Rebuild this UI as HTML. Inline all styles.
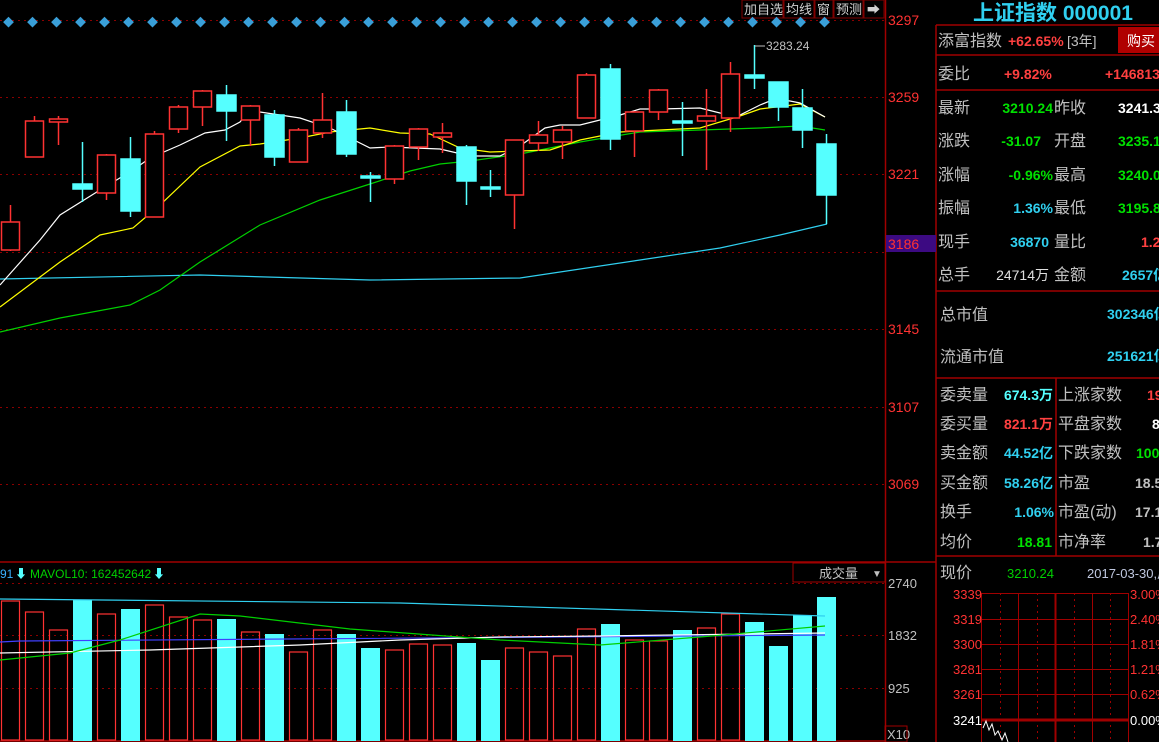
<!DOCTYPE html>
<html><head><meta charset="utf-8"><style>
body{margin:0;background:#000;width:1159px;height:742px;overflow:hidden;font-family:"Liberation Sans","Noto Sans CJK SC",sans-serif}
svg{display:block}
.lb{fill:#c0c0c0;font-size:16px;font-family:"Liberation Sans","Noto Sans CJK SC",sans-serif}
.nm{font-size:14px;font-weight:bold;font-family:"Liberation Sans","Noto Sans CJK SC",sans-serif}
.ax{fill:#ff3232;font-size:14px}
</style></head><body>
<svg width="1159" height="742" xmlns="http://www.w3.org/2000/svg" font-family="Liberation Sans, Noto Sans CJK SC, sans-serif">
<rect width="1159" height="742" fill="#000"/>
<g stroke="#8b0000" stroke-dasharray="2,4" stroke-width="1">
<line x1="0" y1="20.5" x2="885" y2="20.5"/><line x1="0" y1="97.5" x2="885" y2="97.5"/><line x1="0" y1="174.5" x2="885" y2="174.5"/><line x1="0" y1="252.5" x2="885" y2="252.5"/><line x1="0" y1="329.5" x2="885" y2="329.5"/><line x1="0" y1="407.5" x2="885" y2="407.5"/><line x1="0" y1="484.5" x2="885" y2="484.5"/>
<line x1="0" y1="583.5" x2="885" y2="583.5"/><line x1="0" y1="635.5" x2="885" y2="635.5"/><line x1="0" y1="688.5" x2="885" y2="688.5"/>
</g>
<g stroke="#a00000" stroke-width="1.5" fill="none">
<line x1="885.5" y1="0" x2="885.5" y2="742"/>
<line x1="936" y1="25" x2="936" y2="742"/>
<line x1="0" y1="562" x2="936" y2="562"/>
<line x1="0" y1="741" x2="885" y2="741"/>
</g>
<g class="ax">
<text x="888" y="25">3297</text><text x="888" y="102">3259</text><text x="888" y="179">3221</text><text x="888" y="334">3145</text><text x="888" y="412">3107</text><text x="888" y="489">3069</text>
</g>
<rect x="886" y="235" width="50" height="17" fill="#3c0a82"/>
<text x="888" y="249" fill="#ff3232" font-size="14">3186</text>
<g fill="#c0c0c0" font-size="13"><text x="888" y="588">2740</text><text x="888" y="640">1832</text><text x="888" y="693">925</text><text x="887" y="739">X10</text></g>
<rect x="885" y="726" width="22" height="16" fill="none" stroke="#a00000"/>
<g stroke="#800000" fill="none"><rect x="742" y="0" width="41" height="18"/><rect x="784" y="0" width="30" height="18"/><rect x="815" y="0" width="18" height="18"/><rect x="834" y="0" width="29" height="18"/><rect x="864" y="0" width="20" height="18"/></g>
<g fill="#d0d0d0" font-size="13"><text x="744" y="14">加自选</text><text x="786" y="14">均线</text><text x="817" y="14">窗</text><text x="836" y="14">预测</text><text x="867" y="14" font-weight="bold">➡</text></g>
<g fill="#3a9fd8" font-size="11">
<text x="3" y="26">◆</text><text x="27" y="26">◆</text><text x="51" y="26">◆</text><text x="75" y="26">◆</text><text x="99" y="26">◆</text><text x="123" y="26">◆</text><text x="147" y="26">◆</text><text x="171" y="26">◆</text><text x="195" y="26">◆</text><text x="219" y="26">◆</text><text x="243" y="26">◆</text><text x="267" y="26">◆</text><text x="291" y="26">◆</text><text x="315" y="26">◆</text><text x="339" y="26">◆</text><text x="363" y="26">◆</text><text x="387" y="26">◆</text><text x="411" y="26">◆</text><text x="435" y="26">◆</text><text x="459" y="26">◆</text><text x="483" y="26">◆</text><text x="507" y="26">◆</text><text x="531" y="26">◆</text><text x="555" y="26">◆</text><text x="579" y="26">◆</text><text x="603" y="26">◆</text><text x="627" y="26">◆</text><text x="651" y="26">◆</text><text x="675" y="26">◆</text><text x="699" y="26">◆</text><text x="723" y="26">◆</text><text x="747" y="26">◆</text><text x="771" y="26">◆</text><text x="795" y="26">◆</text><text x="819" y="26">◆</text>
</g>
<g fill="none" stroke-width="1.2">
<polyline stroke="#30d0f0" points="0,279 200,275 370,280 520,278 640,260 720,248 780,235 827,224"/>
<polyline stroke="#00d000" points="0,332 60,318 130,305 160,290 200,262 260,225 320,200 370,184 410,171 440,164 470,161 520,154 580,142 640,132 700,130 760,128 800,126 825,130"/>
<polyline stroke="#ffff00" points="0,307 60,262 100,235 133,228 160,205 200,167 240,146 260,144 300,138 330,132 370,128 400,133 430,134 460,148 490,152 550,150 580,140 620,132 660,130 700,128 740,116 760,109 800,104 825,117"/>
<polyline stroke="#ffffff" points="0,285 40,240 60,215 100,190 133,170 150,158 180,145 205,133 225,130 240,122 250,110 260,112 300,118 330,128 370,148 390,147 440,149 470,156 500,156 520,146 545,128 560,125 580,125 620,115 640,109 660,109 700,108 720,113 740,115 760,105 775,99 790,101 800,103 825,117"/>
</g>
<g stroke="#ff3232" stroke-width="1.5" fill="#000">
<line x1="10.5" y1="205" x2="10.5" y2="251"/><rect x="1.5" y="222" width="18" height="28"/>
<line x1="34.5" y1="116" x2="34.5" y2="121"/><rect x="25.5" y="121" width="18" height="36"/>
<line x1="58.5" y1="116" x2="58.5" y2="145"/><rect x="49.5" y="119" width="18" height="3"/>
<line x1="106.5" y1="154" x2="106.5" y2="200"/><rect x="97.5" y="155" width="18" height="38"/>
<line x1="154.5" y1="131" x2="154.5" y2="134"/><rect x="145.5" y="134" width="18" height="83"/>
<line x1="178.5" y1="105" x2="178.5" y2="133"/><rect x="169.5" y="107" width="18" height="22"/>
<line x1="202.5" y1="90" x2="202.5" y2="126"/><rect x="193.5" y="91" width="18" height="16"/>
<line x1="250.5" y1="105" x2="250.5" y2="146"/><rect x="241.5" y="106" width="18" height="14"/>
<line x1="298.5" y1="128" x2="298.5" y2="130"/><rect x="289.5" y="130" width="18" height="32"/>
<line x1="322.5" y1="93" x2="322.5" y2="138"/><rect x="313.5" y="120" width="18" height="13"/>
<line x1="394.5" y1="145" x2="394.5" y2="184"/><rect x="385.5" y="146" width="18" height="33"/>
<line x1="418.5" y1="128" x2="418.5" y2="160"/><rect x="409.5" y="129" width="18" height="18"/>
<line x1="442.5" y1="123" x2="442.5" y2="153"/><rect x="433.5" y="133" width="18" height="4"/>
<line x1="514.5" y1="140" x2="514.5" y2="229"/><rect x="505.5" y="140" width="18" height="55"/>
<line x1="538.5" y1="121" x2="538.5" y2="151"/><rect x="529.5" y="135" width="18" height="8"/>
<line x1="562.5" y1="126" x2="562.5" y2="159"/><rect x="553.5" y="130" width="18" height="12"/>
<line x1="586.5" y1="73" x2="586.5" y2="75"/><rect x="577.5" y="75" width="18" height="43"/>
<line x1="634.5" y1="111" x2="634.5" y2="157"/><rect x="625.5" y="112" width="18" height="19"/>
<line x1="658.5" y1="89" x2="658.5" y2="120"/><rect x="649.5" y="90" width="18" height="22"/>
<line x1="706.5" y1="89" x2="706.5" y2="170"/><rect x="697.5" y="116" width="18" height="5"/>
<line x1="730.5" y1="62" x2="730.5" y2="132"/><rect x="721.5" y="74" width="18" height="44"/>
</g>
<g stroke="#55ffff" stroke-width="1.5" fill="#55ffff">
<line x1="82.5" y1="142" x2="82.5" y2="202"/><rect x="73" y="184" width="19" height="5"/>
<line x1="130.5" y1="137" x2="130.5" y2="217"/><rect x="121" y="159" width="19" height="52"/>
<line x1="226.5" y1="85" x2="226.5" y2="141"/><rect x="217" y="95" width="19" height="16"/>
<line x1="274.5" y1="110" x2="274.5" y2="166"/><rect x="265" y="115" width="19" height="42"/>
<line x1="346.5" y1="100" x2="346.5" y2="157"/><rect x="337" y="112" width="19" height="42"/>
<line x1="370.5" y1="172" x2="370.5" y2="202"/><rect x="361" y="176" width="19" height="2"/>
<line x1="466.5" y1="145" x2="466.5" y2="205"/><rect x="457" y="147" width="19" height="34"/>
<line x1="490.5" y1="170" x2="490.5" y2="197"/><rect x="481" y="187" width="19" height="2"/>
<line x1="610.5" y1="64" x2="610.5" y2="150"/><rect x="601" y="69" width="19" height="70"/>
<line x1="682.5" y1="102" x2="682.5" y2="156"/><rect x="673" y="121" width="19" height="2"/>
<line x1="754.5" y1="45" x2="754.5" y2="89"/><rect x="745" y="75" width="19" height="3"/>
<line x1="778.5" y1="82" x2="778.5" y2="121"/><rect x="769" y="82" width="19" height="25"/>
<line x1="802.5" y1="89" x2="802.5" y2="148"/><rect x="793" y="108" width="19" height="22"/>
<line x1="826.5" y1="134" x2="826.5" y2="224"/><rect x="817" y="144" width="19" height="51"/>
</g>
<line x1="755" y1="46" x2="765" y2="46" stroke="#c0c0c0"/>
<text x="766" y="50" fill="#c0c0c0" font-size="12">3283.24</text>
<text x="0" y="578" fill="#3ab0ff" font-size="12">91</text>
<text x="15" y="578" fill="#55ffff" font-size="12">⬇</text>
<text x="30" y="578" fill="#00d000" font-size="12">MAVOL10: 162452642</text>
<text x="153" y="578" fill="#55ffff" font-size="12">⬇</text>
<rect x="793" y="563" width="92" height="19" fill="none" stroke="#a00000"/>
<text x="819" y="578" fill="#c0c0c0" font-size="13">成交量</text>
<text x="872" y="577" fill="#c0c0c0" font-size="10">▼</text>
<g stroke="#ff3232" stroke-width="1.2" fill="none">
<rect x="1.5" y="601" width="18" height="139"/><rect x="25.5" y="612" width="18" height="128"/><rect x="49.5" y="630" width="18" height="110"/>
<rect x="97.5" y="614" width="18" height="126"/><rect x="145.5" y="605" width="18" height="135"/><rect x="169.5" y="617" width="18" height="123"/><rect x="193.5" y="620" width="18" height="120"/>
<rect x="241.5" y="632" width="18" height="108"/><rect x="289.5" y="652" width="18" height="88"/><rect x="313.5" y="630" width="18" height="110"/>
<rect x="385.5" y="650" width="18" height="90"/><rect x="409.5" y="644" width="18" height="96"/><rect x="433.5" y="645" width="18" height="95"/>
<rect x="505.5" y="648" width="18" height="92"/><rect x="529.5" y="652" width="18" height="88"/><rect x="553.5" y="656" width="18" height="84"/><rect x="577.5" y="629" width="18" height="111"/>
<rect x="625.5" y="640" width="18" height="100"/><rect x="649.5" y="641" width="18" height="99"/><rect x="697.5" y="628" width="18" height="112"/><rect x="721.5" y="614" width="18" height="126"/>
</g>
<g fill="#55ffff">
<rect x="73" y="600" width="19" height="141"/><rect x="121" y="609" width="19" height="132"/><rect x="217" y="619" width="19" height="122"/><rect x="265" y="634" width="19" height="107"/>
<rect x="337" y="634" width="19" height="107"/><rect x="361" y="648" width="19" height="93"/><rect x="457" y="643" width="19" height="98"/><rect x="481" y="660" width="19" height="81"/>
<rect x="601" y="624" width="19" height="117"/><rect x="673" y="630" width="19" height="111"/><rect x="745" y="622" width="19" height="119"/><rect x="769" y="646" width="19" height="95"/>
<rect x="793" y="615" width="19" height="126"/><rect x="817" y="597" width="19" height="144"/>
</g>
<g fill="none" stroke-width="1.2">
<polyline stroke="#30d0f0" points="0,599 400,603 825,616"/>
<polyline stroke="#4040ff" points="0,642 20,641 825,635"/>
<polyline stroke="#ffffff" points="0,653 150,650 300,645 400,640 500,637 600,636 825,633"/>
<polyline stroke="#00d000" points="0,660 70,653 120,640 200,614 240,616 350,629 500,640 600,645 700,637 825,626"/>
</g>
<text x="1053" y="20" text-anchor="middle" fill="#30d0f0" font-size="21" font-weight="bold">上证指数 000001</text>
<g stroke="#a00000" stroke-width="1.5" fill="none">
<line x1="936" y1="25" x2="1159" y2="25"/><line x1="936" y1="55" x2="1159" y2="55"/><line x1="936" y1="90" x2="1159" y2="90"/>
<line x1="936" y1="291" x2="1159" y2="291"/><line x1="936" y1="378" x2="1159" y2="378"/><line x1="936" y1="556" x2="1159" y2="556"/>
<line x1="1056" y1="378" x2="1056" y2="556"/>
</g>
<rect x="1118" y="27" width="41" height="26" fill="#b00000"/>
<text x="1127" y="46" fill="#fff" font-size="14">购买</text>
<text x="938" y="46" class="lb">添富指数</text>
<text x="1008" y="46" fill="#ff4040" class="nm">+62.65%</text><text x="1067" y="46" fill="#c0c0c0" font-size="14">[3年]</text>
<text x="938" y="79" class="lb">委比</text><text x="1004" y="79" fill="#ff4040" class="nm">+9.82%</text><text x="1105" y="79" fill="#ff4040" class="nm">+146813</text>
<g class="lb"><text x="938" y="113">最新</text><text x="938" y="146">涨跌</text><text x="938" y="180">涨幅</text><text x="938" y="213">振幅</text><text x="938" y="247">现手</text><text x="938" y="280">总手</text>
<text x="1054" y="113">昨收</text><text x="1054" y="146">开盘</text><text x="1054" y="180">最高</text><text x="1054" y="213">最低</text><text x="1054" y="247">量比</text><text x="1054" y="280">金额</text></g>
<g class="nm" text-anchor="end">
<text x="1053" y="113" fill="#00e000">3210.24</text><text x="1041" y="146" fill="#00e000">-31.07</text><text x="1053" y="180" fill="#00e000">-0.96%</text><text x="1053" y="213" fill="#30d0f0">1.36%</text><text x="1049" y="247" fill="#30d0f0">36870</text><text x="1049" y="280" fill="#e0e0e0" font-weight="normal">24714万</text>
</g>
<g class="nm"><text x="1118" y="113" fill="#fff">3241.3</text><text x="1118" y="146" fill="#00e000">3235.1</text><text x="1118" y="180" fill="#00e000">3240.0</text><text x="1118" y="213" fill="#00e000">3195.8</text><text x="1141" y="247" fill="#ff4040">1.2</text><text x="1122" y="280" fill="#30d0f0">2657亿</text></g>
<text x="940" y="320" class="lb">总市值</text><text x="1107" y="319" fill="#30d0f0" class="nm">302346亿</text>
<text x="940" y="362" class="lb">流通市值</text><text x="1107" y="361" fill="#30d0f0" class="nm">251621亿</text>
<g class="lb"><text x="940" y="400">委卖量</text><text x="940" y="429">委买量</text><text x="940" y="458">卖金额</text><text x="940" y="488">买金额</text><text x="940" y="517">换手</text><text x="940" y="547">均价</text>
<text x="1058" y="400">上涨家数</text><text x="1058" y="429">平盘家数</text><text x="1058" y="458">下跌家数</text><text x="1058" y="488">市盈</text><text x="1058" y="517">市盈(动)</text><text x="1058" y="547">市净率</text></g>
<g class="nm" text-anchor="end">
<text x="1053" y="400" fill="#55ffff">674.3万</text><text x="1053" y="429" fill="#ff4040">821.1万</text><text x="1053" y="458" fill="#30d0f0">44.52亿</text><text x="1053" y="488" fill="#30d0f0">58.26亿</text><text x="1054" y="517" fill="#30d0f0">1.06%</text><text x="1052" y="547" fill="#00e000">18.81</text></g>
<g class="nm"><text x="1147" y="400" fill="#ff4040">19</text><text x="1152" y="429" fill="#fff">8</text><text x="1136" y="458" fill="#00e000">100</text><text x="1135" y="488" fill="#c0c0c0">18.5</text><text x="1135" y="517" fill="#c0c0c0">17.1</text><text x="1143" y="547" fill="#c0c0c0">1.7</text></g>
<text x="940" y="578" class="lb">现价</text><text x="1007" y="578" fill="#00d000" font-size="13">3210.24</text><text x="1087" y="578" fill="#c0c8e0" font-size="13">2017-03-30,周</text>
<g stroke="#a00000" stroke-width="1" fill="none">
<rect x="981.5" y="593.5" width="147" height="150"/>
<line x1="981" y1="619.5" x2="1128" y2="619.5"/><line x1="981" y1="644.5" x2="1128" y2="644.5"/><line x1="981" y1="669.5" x2="1128" y2="669.5"/><line x1="981" y1="694.5" x2="1128" y2="694.5"/>
<line x1="1018.5" y1="593" x2="1018.5" y2="742"/><line x1="1055.5" y1="593" x2="1055.5" y2="742" stroke-width="2"/><line x1="1092.5" y1="593" x2="1092.5" y2="742"/>
</g>
<g stroke="#a00000" stroke-dasharray="2,4"><line x1="1000.5" y1="593" x2="1000.5" y2="742"/><line x1="1037.5" y1="593" x2="1037.5" y2="742"/><line x1="1074.5" y1="593" x2="1074.5" y2="742"/><line x1="1110.5" y1="593" x2="1110.5" y2="742"/></g>
<line x1="981" y1="720" x2="1128" y2="720" stroke="#a00000" stroke-width="3"/>
<g fill="#ff3232" font-size="13"><text x="953" y="599">3339</text><text x="953" y="624">3319</text><text x="953" y="649">3300</text><text x="953" y="674">3281</text><text x="953" y="699">3261</text>
<text x="1130" y="599">3.00%</text><text x="1130" y="624">2.40%</text><text x="1130" y="649">1.81%</text><text x="1130" y="674">1.21%</text><text x="1130" y="699">0.62%</text></g>
<text x="953" y="725" fill="#fff" font-size="13">3241</text><text x="1130" y="725" fill="#fff" font-size="13">0.00%</text>
<polyline fill="none" stroke="#fff" points="983,728 986,721 989,730 992,724 995,735 998,731 1002,740 1005,733 1008,742"/>
</svg>
</body></html>
